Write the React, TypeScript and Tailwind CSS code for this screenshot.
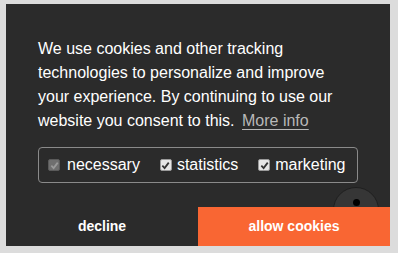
import React from "react";

function Box({ disabled }: { disabled?: boolean }) {
  return (
    <span
      className={
        "inline-flex items-center justify-center w-[12px] h-[12px] rounded-[2px] border " +
        (disabled ? "bg-[#6f6f6f] border-[#5a5a5a]" : "bg-[#e6e6e6] border-[#9a9a9a]")
      }
    >
      <svg width="9" height="9" viewBox="0 0 10 10">
        <path
          d="M1.5 5.2 L4 7.8 L8.6 1.8"
          fill="none"
          stroke={disabled ? "#9a9a9a" : "#333"}
          strokeWidth="2"
        />
      </svg>
    </span>
  );
}

export default function App() {
  return (
    <div
      className="w-[398px] h-[253px] bg-[#dcdcdc] pt-[4px] pl-[6px]"
      style={{ fontFamily: '"Liberation Sans", Arial, sans-serif' }}
    >
      <div className="relative w-[384px] h-[242px] bg-[#2b2b2b] flex flex-col">
        <p className="px-8 pt-[33px] text-[16px] leading-[24px] text-white">
          We use cookies and other tracking technologies to personalize and improve your experience. By continuing to use our website you consent to this.{" "}
          <a className="ml-[3px] text-[#b8b8b8] underline underline-offset-[3px] decoration-[#b8b8b8]">
            More info
          </a>
        </p>
        <div className="mx-8 mt-[14px] h-[36px] border border-[#8a8a8a] rounded-[4px] flex items-center pl-[9px] text-white text-[16px]">
          <span className="flex items-center gap-[7px]">
            <Box disabled />
            <span>necessary</span>
          </span>
          <span className="flex items-center gap-[5px] ml-[20px]">
            <Box />
            <span>statistics</span>
          </span>
          <span className="flex items-center gap-[5px] ml-[20px]">
            <Box />
            <span>marketing</span>
          </span>
        </div>
        <div className="absolute left-[327px] top-[183px] w-[46px] h-[46px] rounded-full bg-[#363636] border border-[#1f1f1f] flex justify-center">
          <span className="mt-[11px] w-[7px] h-[7px] rounded-full bg-black" />
        </div>
        <div className="relative mt-auto flex h-[39px] text-[14px] font-bold text-white">
          <div className="w-[192px] flex items-center justify-center">decline</div>
          <div className="w-[192px] flex items-center justify-center bg-[#f96633]">allow cookies</div>
        </div>
      </div>
    </div>
  );
}
